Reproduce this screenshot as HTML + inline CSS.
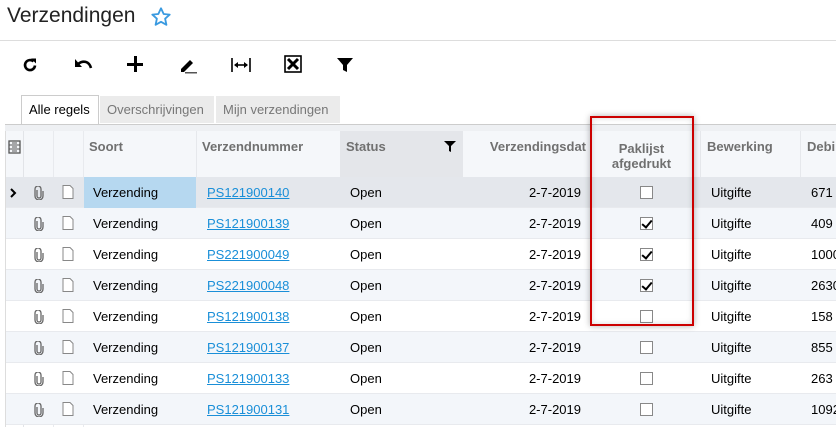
<!DOCTYPE html>
<html><head><style>
*{margin:0;padding:0;box-sizing:border-box}
body{width:836px;height:427px;overflow:hidden;background:#fff;font-family:"Liberation Sans",Arial,sans-serif;position:relative;color:#000}
.a{position:absolute}
.h{font-size:13px;font-weight:bold;color:#707070}
.c{font-size:13px}
a{color:#1a8fd8;text-decoration:underline}
.cb{position:absolute;width:13px;height:13px;border:1px solid #888;background:#fff;left:640px}
.cb.k::after{content:"";position:absolute;left:3px;top:0px;width:4px;height:8px;border:solid #000;border-width:0 2px 2px 0;transform:rotate(40deg)}
</style></head><body>
<div class="a" style="left:7px;top:4px;font-size:21px;color:#222">Verzendingen</div>
<svg class="a" style="left:150px;top:6px" width="22" height="22" viewBox="0 0 24 24"><path d="M12 2.5l2.9 6.2 6.6.7-5 4.5 1.4 6.6L12 17.2 6.1 20.5l1.4-6.6-5-4.5 6.6-.7z" fill="none" stroke="#3a9ae0" stroke-width="2" stroke-linejoin="round"/></svg>
<div class="a" style="left:0;top:40px;width:836px;height:1px;background:#ddd"></div>
<svg class="a" style="left:21px;top:56px" width="18" height="18" viewBox="0 0 18 18"><path d="M14 9.5A5 5 0 1 1 12.5 5.5" fill="none" stroke="#000" stroke-width="2.6"/><path d="M10 2.5h5v5z" fill="#000"/></svg>
<svg class="a" style="left:73px;top:57px" width="20" height="16" viewBox="0 0 20 16"><path d="M5 7c5-4 11-3 13 4" fill="none" stroke="#000" stroke-width="2.6"/><path d="M2 2v8h7z" fill="#000"/></svg>
<div class="a" style="left:127px;top:63px;width:16px;height:3px;background:#000"></div>
<div class="a" style="left:134px;top:56px;width:3px;height:16px;background:#000"></div>
<svg class="a" style="left:178px;top:56px" width="20" height="18" viewBox="0 0 20 18"><path d="M3 13l9-9 3 3-9 9H3z" fill="#000"/><rect x="7" y="16" width="12" height="1.5" fill="#555"/></svg>
<svg class="a" style="left:230px;top:56px" width="22" height="18" viewBox="0 0 22 18"><path d="M2 2v14M20 2v14" stroke="#000" stroke-width="1.6"/><path d="M5 9h12" stroke="#000" stroke-width="1.6"/><path d="M4 9l4-3v6zM18 9l-4-3v6z" fill="#000"/></svg>
<svg class="a" style="left:284px;top:55px" width="18" height="18" viewBox="0 0 18 18"><rect x="1" y="1" width="16" height="16" fill="#fff" stroke="#000" stroke-width="1.6"/><path d="M4 4l10 10M14 4L4 14" stroke="#000" stroke-width="3"/></svg>
<svg class="a" style="left:336px;top:57px" width="18" height="16" viewBox="0 0 18 16"><path d="M1 1h16l-6 7v7l-4-2V8z" fill="#000"/></svg>
<div class="a" style="left:21px;top:95px;width:78px;height:30px;border:1px solid #ccc;border-bottom:none;background:#fff;font-size:13px;padding:6px 0 0 7px">Alle regels</div>
<div class="a" style="left:100px;top:96px;width:114px;height:27px;background:#ebebeb;font-size:13px;color:#777;padding:6px 0 0 7px">Overschrijvingen</div>
<div class="a" style="left:216px;top:96px;width:124px;height:27px;background:#ebebeb;font-size:13px;color:#777;padding:6px 0 0 7px">Mijn verzendingen</div>
<div class="a" style="left:5px;top:124px;width:831px;height:1px;background:#ccc"></div>
<div class="a" style="left:5px;top:125px;width:831px;height:6px;background:#eef0f3"></div>
<div class="a" style="left:5px;top:131px;width:831px;height:46px;background:#f5f7fa"></div>
<div class="a" style="left:340px;top:131px;width:123px;height:46px;background:#e4e6ea"></div>
<div class="a" style="left:5px;top:131px;width:1px;height:296px;background:#ddd"></div>
<div class="a" style="left:23px;top:131px;width:1px;height:296px;background:#e2e4e8"></div>
<div class="a" style="left:53px;top:131px;width:1px;height:296px;background:#e8eaee"></div>
<div class="a" style="left:83px;top:131px;width:1px;height:296px;background:#e8eaee"></div>
<div class="a" style="left:196px;top:131px;width:1px;height:46px;background:#e6e8ec"></div>
<div class="a" style="left:700px;top:131px;width:1px;height:46px;background:#e6e8ec"></div>
<div class="a" style="left:800px;top:131px;width:1px;height:46px;background:#e6e8ec"></div>
<svg class="a" style="left:8px;top:140px" width="13" height="14" viewBox="0 0 13 14"><rect x="1" y="1" width="11" height="12" fill="none" stroke="#555" stroke-width="1.3"/><path d="M1 5h11M1 9h11M4 3h5M4 7h5M4 11h5" stroke="#555"/></svg>
<div class="a h" style="left:89px;top:139px">Soort</div>
<div class="a h" style="left:202px;top:139px">Verzendnummer</div>
<div class="a h" style="left:346px;top:139px">Status</div>
<svg class="a" style="left:444px;top:141px" width="12" height="11" viewBox="0 0 12 11"><path d="M0 0h12L7 5v6L5 10V5z" fill="#000"/></svg>
<div class="a h" style="left:463px;top:139px;width:123px;text-align:right">Verzendingsdat</div>
<div class="a h" style="left:590px;top:141px;width:103px;text-align:center;line-height:15px">Paklijst<br>afgedrukt</div>
<div class="a h" style="left:707px;top:139px">Bewerking</div>
<div class="a h" style="left:807px;top:139px">Debi</div>
<div id="rows"></div>
<script>
var d=[["PS121900140",0,"671"],["PS121900139",1,"409"],["PS221900049",1,"1000"],["PS221900048",1,"2630"],["PS121900138",0,"158"],["PS121900137",0,"855"],["PS121900133",0,"263"],["PS121900131",0,"1092"]];
var h="";
d.forEach(function(r,i){var y=177+i*31;var bg=i==0?"#e4e7ec":(i%2?"#f3f6fa":"#fff");
h+='<div class="a" style="left:6px;top:'+y+'px;width:830px;height:31px;background:'+bg+';border-bottom:1px solid #e8eaee"></div>';
if(i==0){h+='<div class="a" style="left:84px;top:'+y+'px;width:112px;height:31px;background:#b6d8f0"></div><svg class="a" style="left:10px;top:'+(y+11)+'px" width="7" height="10" viewBox="0 0 7 10"><path d="M1 1l4 4-4 4" fill="none" stroke="#000" stroke-width="2"/></svg>';}
h+='<svg class="a" style="left:34px;top:'+(y+9)+'px" width="10" height="14" viewBox="0 0 10 14"><path d="M3 4v6a2 2 0 0 0 4 0V3a3 3 0 0 0-6 0v7a4 4 0 0 0 8 0V5" fill="none" stroke="#666" stroke-width="1.3"/></svg>';
h+='<svg class="a" style="left:62px;top:'+(y+8)+'px" width="12" height="14" viewBox="0 0 12 14"><path d="M1 .5h7l3 3v10H1z" fill="#fff" stroke="#888"/></svg>';
var t=y+8;
h+='<div class="a c" style="left:93px;top:'+t+'px">Verzending</div>';
h+='<div class="a c" style="left:207px;top:'+t+'px"><a>'+r[0]+'</a></div>';
h+='<div class="a c" style="left:350px;top:'+t+'px">Open</div>';
h+='<div class="a c" style="left:463px;top:'+t+'px;width:118px;text-align:right">2-7-2019</div>';
h+='<div class="cb'+(r[1]?' k':'')+'" style="top:'+(y+9)+'px"></div>';
h+='<div class="a c" style="left:711px;top:'+t+'px">Uitgifte</div>';
h+='<div class="a c" style="left:811px;top:'+t+'px">'+r[2]+'</div>';
});
document.getElementById("rows").innerHTML=h;
</script>
<div class="a" style="left:590px;top:116px;width:104px;height:210px;border:2px solid #c00;box-shadow:0 0 6px rgba(0,0,0,.3), inset 0 0 6px rgba(0,0,0,.15)"></div>
</body></html>
